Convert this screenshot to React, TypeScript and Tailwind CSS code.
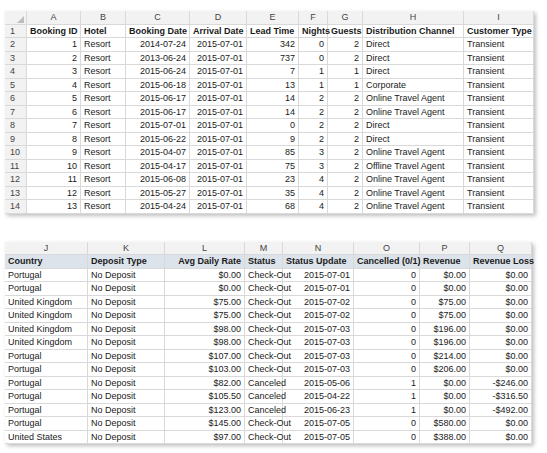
const topCols = [{l:"A",w:54,r:true},{l:"B",w:45},{l:"C",w:64,r:true},{l:"D",w:57,r:true},{l:"E",w:52,r:true},{l:"F",w:29,r:true},{l:"G",w:35,r:true},{l:"H",w:101},{l:"I",w:70}];
const topHead = ["Booking ID","Hotel","Booking Date","Arrival Date","Lead Time","Nights","Guests","Distribution Channel","Customer Type"];
const topRows = [
["1","Resort","2014-07-24","2015-07-01","342","0","2","Direct","Transient"],
["2","Resort","2013-06-24","2015-07-01","737","0","2","Direct","Transient"],
["3","Resort","2015-06-24","2015-07-01","7","1","1","Direct","Transient"],
["4","Resort","2015-06-18","2015-07-01","13","1","1","Corporate","Transient"],
["5","Resort","2015-06-17","2015-07-01","14","2","2","Online Travel Agent","Transient"],
["6","Resort","2015-06-17","2015-07-01","14","2","2","Online Travel Agent","Transient"],
["7","Resort","2015-07-01","2015-07-01","0","2","2","Direct","Transient"],
["8","Resort","2015-06-22","2015-07-01","9","2","2","Direct","Transient"],
["9","Resort","2015-04-07","2015-07-01","85","3","2","Online Travel Agent","Transient"],
["10","Resort","2015-04-17","2015-07-01","75","3","2","Offline Travel Agent","Transient"],
["11","Resort","2015-06-08","2015-07-01","23","4","2","Online Travel Agent","Transient"],
["12","Resort","2015-05-27","2015-07-01","35","4","2","Online Travel Agent","Transient"],
["13","Resort","2015-04-24","2015-07-01","68","4","2","Online Travel Agent","Transient"],
];
const botCols = [{l:"J",w:83},{l:"K",w:77},{l:"L",w:80,r:true},{l:"M",w:38},{l:"N",w:71,r:true},{l:"O",w:66,r:true},{l:"P",w:50,r:true},{l:"Q",w:62,r:true}];
const botHead = ["Country","Deposit Type","Avg Daily Rate","Status","Status Update","Cancelled (0/1)","Revenue","Revenue Loss"];
const botRows = [
["Portugal","No Deposit","$0.00","Check-Out","2015-07-01","0","$0.00","$0.00"],
["Portugal","No Deposit","$0.00","Check-Out","2015-07-01","0","$0.00","$0.00"],
["United Kingdom","No Deposit","$75.00","Check-Out","2015-07-02","0","$75.00","$0.00"],
["United Kingdom","No Deposit","$75.00","Check-Out","2015-07-02","0","$75.00","$0.00"],
["United Kingdom","No Deposit","$98.00","Check-Out","2015-07-03","0","$196.00","$0.00"],
["United Kingdom","No Deposit","$98.00","Check-Out","2015-07-03","0","$196.00","$0.00"],
["Portugal","No Deposit","$107.00","Check-Out","2015-07-03","0","$214.00","$0.00"],
["Portugal","No Deposit","$103.00","Check-Out","2015-07-03","0","$206.00","$0.00"],
["Portugal","No Deposit","$82.00","Canceled","2015-05-06","1","$0.00","-$246.00"],
["Portugal","No Deposit","$105.50","Canceled","2015-04-22","1","$0.00","-$316.50"],
["Portugal","No Deposit","$123.00","Canceled","2015-06-23","1","$0.00","-$492.00"],
["Portugal","No Deposit","$145.00","Check-Out","2015-07-05","0","$580.00","$0.00"],
["United States","No Deposit","$97.00","Check-Out","2015-07-05","0","$388.00","$0.00"],
];
const cell = "h-[13.5px] leading-[13.5px] px-[3px] whitespace-nowrap overflow-visible border-r border-b border-[#d9d9d9]";

export default function App() {
  return (
    <div className="w-[547px] h-[453px] bg-white pt-[11px] pl-[5px]" style={{fontFamily:'"Liberation Sans", Arial, sans-serif', fontSize: "9px", color: "#1a1a1a"}}>
      <div className="w-fit shadow-[2px_2px_4px_rgba(0,0,0,0.25)]">
        <div className="flex bg-[#f2f2f2] text-[#444]">
          <div className={`${cell} w-[22px] relative`}><span className="absolute right-[2px] bottom-[1px] w-0 h-0 border-l-[7px] border-l-transparent border-b-[7px] border-b-[#bdbdbd]"></span></div>
          {topCols.map(c => <div key={c.l} className={`${cell} text-center`} style={{width:c.w}}>{c.l}</div>)}
        </div>
        {[topHead, ...topRows].map((row, i) => (
          <div key={i} className="flex">
            <div className={`${cell} w-[22px] bg-[#f2f2f2] text-[#444] pl-[5px]`}>{i+1}</div>
            {row.map((v, j) => <div key={j} className={`${cell} ${i===0 ? "font-bold" : ""} ${topCols[j].r && i>0 ? "text-right" : ""} overflow-hidden`} style={{width: topCols[j].w}}>{v}</div>)}
          </div>
        ))}
      </div>
      <div className="h-[28px]"></div>
      <div className="w-fit shadow-[2px_2px_4px_rgba(0,0,0,0.25)]">
        <div className="flex bg-[#f2f2f2] text-[#444]">
          {botCols.map(c => <div key={c.l} className={`${cell} text-center`} style={{width:c.w}}>{c.l}</div>)}
        </div>
        <div className="flex bg-[#dde3ea] font-bold">
          {botHead.map((h, j) => <div key={j} className={`${cell} ${j===2 ? "text-right" : ""} overflow-hidden`} style={{width: botCols[j].w}}>{h}</div>)}
        </div>
        {botRows.map((row, i) => (
          <div key={i} className="flex">
            {row.map((v, j) => <div key={j} className={`${cell} ${botCols[j].r ? "text-right" : ""} overflow-hidden`} style={{width: botCols[j].w}}>{v}</div>)}
          </div>
        ))}
      </div>
    </div>
  );
}
